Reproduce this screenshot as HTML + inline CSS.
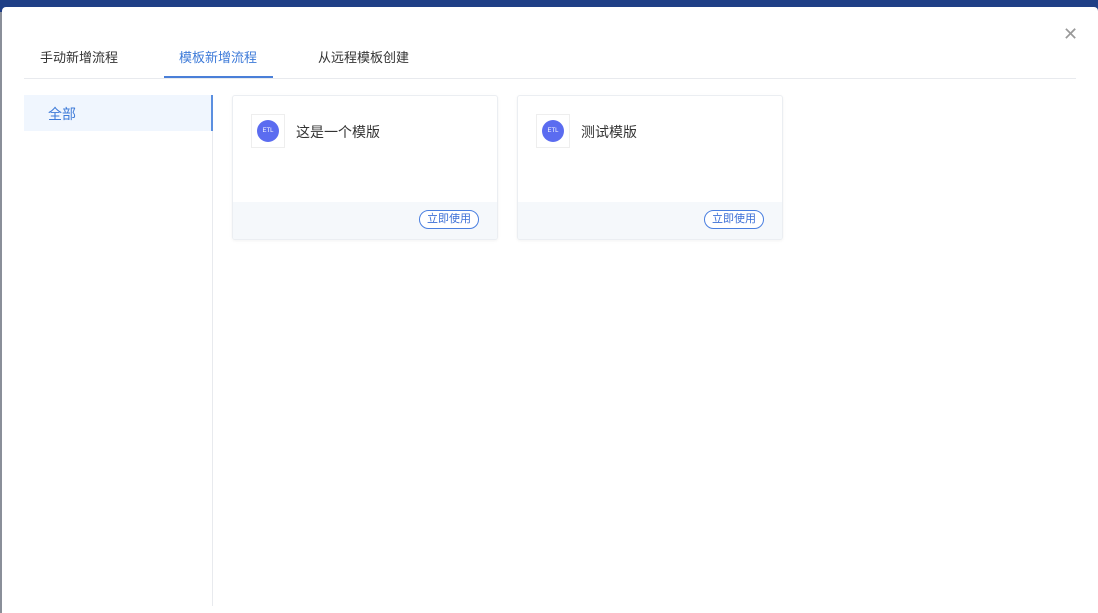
<!DOCTYPE html><html><head><meta charset="utf-8"><style>
body{margin:0;width:1098px;height:613px;overflow:hidden;background:#8a8f99;font-family:"Liberation Sans","Noto Sans CJK SC",sans-serif;position:relative}
.top{position:absolute;left:0;top:0;width:1098px;height:12px;background:#1f3f86}
.modal{position:absolute;left:2px;top:7px;width:1096px;height:606px;background:#fff;border-radius:4px 4px 0 0}
.tab{position:absolute;top:47px;font-size:13px;color:#333}
.x{position:absolute;left:1063px;top:24px;font-size:18px;color:#999}
.card{position:absolute;top:95px;width:264px;height:143px;border:1px solid #ebeef2;border-radius:3px;background:#fff;box-shadow:0 1px 3px rgba(0,0,0,.05);overflow:hidden}
.ic{position:absolute;left:18px;top:18px;width:34px;height:34px;border:1px solid #eee;box-sizing:border-box}
.ic div{position:absolute;left:5px;top:5px;width:22px;height:22px;border-radius:50%;background:#5b6cf0;color:#fff;font-size:6px;line-height:22px;text-align:center}
.t{position:absolute;left:63px;top:26px;font-size:14px;color:#333}
.f{position:absolute;left:0;bottom:0;width:100%;height:37px;background:#f5f8fb}
.b{position:absolute;right:18px;top:8px;height:17px;padding:0 7px;border:1px solid #4a7fe0;border-radius:10px;font-size:11px;line-height:17px;color:#3c6fd6;background:#fff}
</style></head><body>
<div class="top"></div>
<div class="modal"></div>
<div class="tab" style="left:40px">手动新增流程</div>
<div class="tab" style="left:179px;color:#3d7ad8">模板新增流程</div>
<div class="tab" style="left:318px">从远程模板创建</div>
<div class="x">✕</div>
<div style="position:absolute;left:24px;top:78px;width:1052px;height:1px;background:#e8eaee"></div>
<div style="position:absolute;left:164px;top:76px;width:109px;height:2px;background:#4a7fd8"></div>
<div style="position:absolute;left:24px;top:95px;width:187px;height:36px;background:#f0f6fe;border-right:2px solid #5b8fe0"></div>
<div style="position:absolute;left:48px;top:104px;font-size:14px;color:#3d7ad8">全部</div>
<div style="position:absolute;left:212px;top:131px;width:1px;height:475px;background:#e8eaee"></div>
<div class="card" style="left:232px"><div class="ic"><div>ETL</div></div><div class="t">这是一个模版</div><div class="f"><div class="b">立即使用</div></div></div>
<div class="card" style="left:517px"><div class="ic"><div>ETL</div></div><div class="t">测试模版</div><div class="f"><div class="b">立即使用</div></div></div>
</body></html>
